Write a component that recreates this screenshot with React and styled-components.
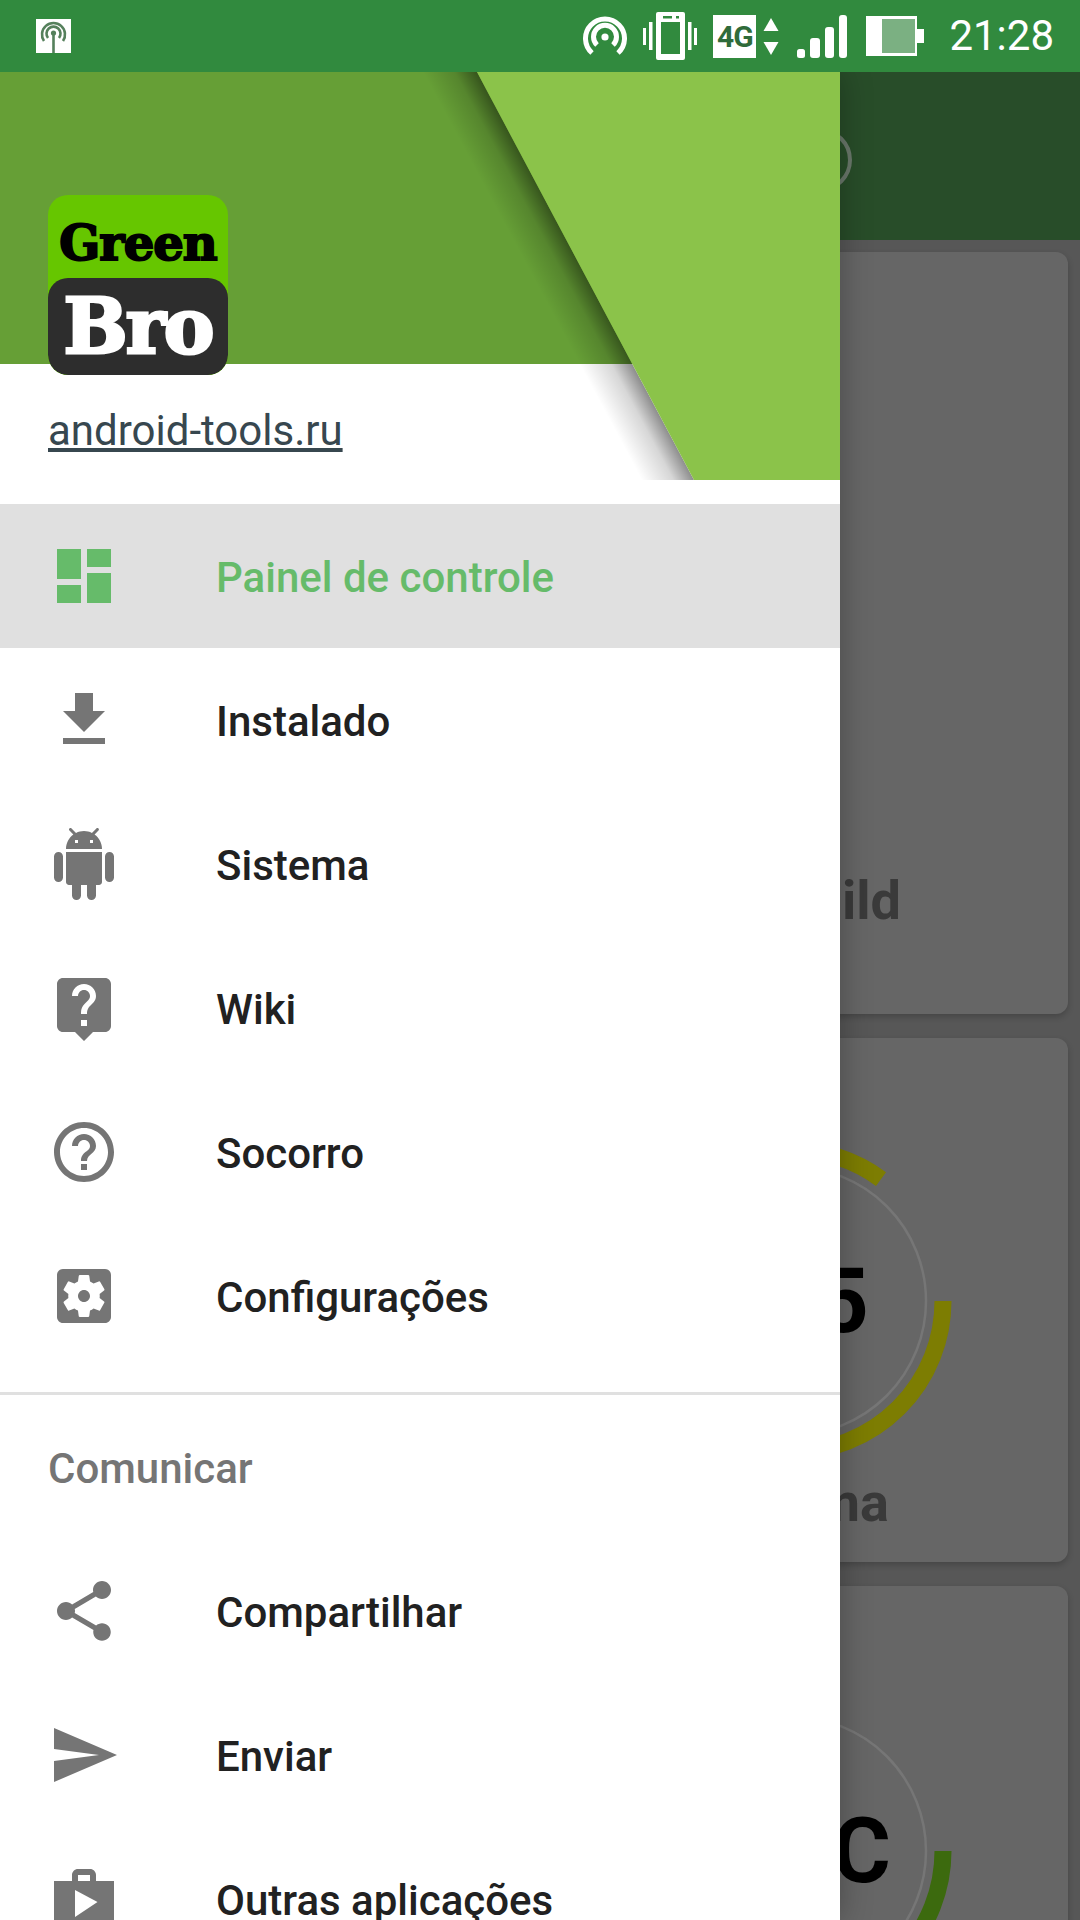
import styled, { createGlobalStyle } from "styled-components"

const GlobalStyle = createGlobalStyle`
    html, body {
        margin: 0;
        padding: 0;
        background-color: #575757;
    }

    * {
        box-sizing: border-box;
    }
`

const ICONS = {
    dashboard: "M3 13h8V3H3v10zm0 8h8v-6H3v6zm10 0h8V11h-8v10zm0-18v6h8V3h-8z",
    download: "M19 9h-4V3H9v6H5l7 7 7-7zM5 18v2h14v-2H5z",
    android: "M6 18c0 .55.45 1 1 1h1v3.5c0 .83.67 1.5 1.5 1.5s1.5-.67 1.5-1.5V19h2v3.5c0 .83.67 1.5 1.5 1.5s1.5-.67 1.5-1.5V19h1c.55 0 1-.45 1-1V8H6v10zM3.5 8C2.67 8 2 8.67 2 9.5v7c0 .83.67 1.5 1.5 1.5S5 17.33 5 16.5v-7C5 8.67 4.33 8 3.5 8zm17 0c-.83 0-1.5.67-1.5 1.5v7c0 .83.67 1.5 1.5 1.5s1.5-.67 1.5-1.5v-7c0-.83-.67-1.5-1.5-1.5zm-4.97-5.84l1.3-1.3c.2-.2.2-.51 0-.71-.2-.2-.51-.2-.71 0l-1.48 1.48C13.85 1.23 12.95 1 12 1c-.96 0-1.86.23-2.66.63L7.85.15c-.2-.2-.51-.2-.71 0-.2.2-.2.51 0 .71l1.31 1.31C6.97 3.26 6 5.01 6 7h12c0-1.99-.97-3.75-2.47-4.84zM10 5H9V4h1v1zm5 0h-1V4h1v1z",
    liveHelp: "M19 2H5c-1.11 0-2 .9-2 2v14c0 1.1.89 2 2 2h4l3 3 3-3h4c1.1 0 2-.9 2-2V4c0-1.1-.9-2-2-2zm-6 16h-2v-2h2v2zm2.07-7.75l-.9.92C13.45 11.9 13 12.5 13 14h-2v-.5c0-1.1.45-2.1 1.17-2.83l1.24-1.26c.37-.36.59-.86.59-1.41 0-1.1-.9-2-2-2s-2 .9-2 2H8c0-2.21 1.79-4 4-4s4 1.79 4 4c0 .88-.36 1.68-.93 2.25z",
    help: "M11 18h2v-2h-2v2zm1-16C6.48 2 2 6.48 2 12s4.48 10 10 10 10-4.48 10-10S17.52 2 12 2zm0 18c-4.41 0-8-3.59-8-8s3.59-8 8-8 8 3.59 8 8-3.59 8-8 8zm0-14c-2.21 0-4 1.79-4 4h2c0-1.1.9-2 2-2s2 .9 2 2c0 2-3 1.75-3 5h2c0-2.25 3-2.5 3-5 0-2.21-1.79-4-4-4z",
    settings: "M12 10c-1.1 0-2 .9-2 2s.9 2 2 2 2-.9 2-2-.9-2-2-2zm7-7H5c-1.11 0-2 .9-2 2v14c0 1.1.89 2 2 2h14c1.11 0 2-.9 2-2V5c0-1.1-.89-2-2-2zm-1.75 9c0 .23-.02.46-.05.68l1.48 1.16c.13.11.17.3.08.45l-1.4 2.42c-.09.15-.27.21-.43.15l-1.74-.7c-.36.28-.76.51-1.18.69l-.26 1.85c-.03.17-.18.3-.35.3h-2.8c-.17 0-.32-.13-.35-.29l-.26-1.85c-.43-.18-.82-.41-1.18-.69l-1.74.7c-.16.06-.34 0-.43-.15l-1.4-2.42c-.09-.15-.05-.34.08-.45l1.48-1.16c-.03-.23-.05-.46-.05-.69 0-.23.02-.46.05-.68l-1.48-1.16c-.13-.11-.17-.3-.08-.45l1.4-2.42c.09-.15.27-.21.43-.15l1.74.7c.36-.28.76-.51 1.18-.69l.26-1.85c.03-.17.18-.3.35-.3h2.8c.17 0 .32.13.35.29l.26 1.85c.43.18.82.41 1.18.69l1.74-.7c.16-.06.34 0 .43.15l1.4 2.42c.09.15.05.34-.08.45l-1.48 1.16c.03.23.05.46.05.69z",
    share: "M18 16.08c-.76 0-1.44.3-1.96.77L8.91 12.7c.05-.23.09-.46.09-.7s-.04-.47-.09-.7l7.05-4.11c.54.5 1.25.81 2.04.81 1.66 0 3-1.34 3-3s-1.34-3-3-3-3 1.34-3 3c0 .24.04.47.09.7L8.04 9.81C7.5 9.31 6.79 9 6 9c-1.66 0-3 1.34-3 3s1.34 3 3 3c.79 0 1.5-.31 2.04-.81l7.12 4.16c-.05.21-.08.43-.08.65 0 1.61 1.31 2.92 2.92 2.92 1.61 0 2.92-1.31 2.92-2.92s-1.31-2.92-2.92-2.92z",
    send: "M2.01 21L23 12 2.01 3 2 10l15 2-15 2z",
    shop: "M16 6V4c0-1.11-.89-2-2-2h-4c-1.11 0-2 .89-2 2v2H2v13c0 1.11.89 2 2 2h16c1.11 0 2-.89 2-2V6h-6zm-6-2h4v2h-4V4zM9 18V9l7.5 4-7.5 5z",
}

const mainItems = [
    { icon: "dashboard", label: "Painel de controle", active: true },
    { icon: "download", label: "Instalado" },
    { icon: "android", label: "Sistema" },
    { icon: "liveHelp", label: "Wiki" },
    { icon: "help", label: "Socorro" },
    { icon: "settings", label: "Configurações" },
]

const communicateItems = [
    { icon: "share", label: "Compartilhar" },
    { icon: "send", label: "Enviar" },
    { icon: "shop", label: "Outras aplicações" },
]

function MenuList({ items }) {
    return items.map(item => (
        <MenuRow key={item.label} $active={item.active}>
            <svg width="72" height="72" viewBox="0 0 24 24" fill="currentColor">
                <path d={ICONS[item.icon]} />
            </svg>
            <MenuLabel $active={item.active}>{item.label}</MenuLabel>
        </MenuRow>
    ))
}

function Gauge({ color, percent, value, inset }) {
    const radius = 151
    const length = 2 * Math.PI * radius
    return (
        <GaugeBox>
            <svg width="340" height="340" viewBox="0 0 340 340" fill="none">
                <circle cx="170" cy="170" r="134" stroke="#767676" strokeWidth="2.5" />
                <circle
                    cx="170"
                    cy="170"
                    r={radius}
                    stroke={color}
                    strokeWidth="17"
                    strokeDasharray={`${length * percent} ${length}`}
                />
            </svg>
            <GaugeValue $inset={inset}>{value}</GaugeValue>
        </GaugeBox>
    )
}

export default function App() {
    return (
        <Screen>
            <GlobalStyle />

            <StatusBar>
                <svg width="35" height="34" viewBox="0 0 35 34">
                    <rect width="35" height="34" fill="#fff" />
                    <g fill="none" stroke="#55805c" strokeWidth="2.6">
                        <path d="M8 22a11.5 11.5 0 1 1 19 0" />
                        <path d="M12 19a7 7 0 1 1 11 0" />
                    </g>
                    <circle cx="17.5" cy="14" r="2.6" fill="#55805c" />
                    <rect x="16.2" y="14" width="2.6" height="20" fill="#55805c" />
                </svg>

                <StatusIcons>
                    <svg width="44" height="40" viewBox="0 0 44 40" fill="none" stroke="#fff" strokeWidth="5">
                        <path d="M9 37a19.5 19.5 0 1 1 26 0" />
                        <path d="M14 29a11.5 11.5 0 1 1 16 0" />
                        <circle cx="22" cy="21" r="3.6" fill="#fff" stroke="none" />
                    </svg>

                    <svg width="54" height="48" viewBox="0 0 54 48" fill="#fff">
                        <path fillRule="evenodd" d="M15 0h25a2 2 0 0 1 2 2v44a2 2 0 0 1-2 2H15a2 2 0 0 1-2-2V2a2 2 0 0 1 2-2zM18 10v32h19V10zM20 4v2.5h9V4zM33 4v2.5h3V4z" />
                        <rect x="0" y="16" width="3" height="17" />
                        <rect x="6" y="10" width="3.5" height="28" />
                        <rect x="45" y="10" width="3.5" height="28" />
                        <rect x="51" y="16" width="3" height="17" />
                    </svg>

                    <NetworkGroup>
                        <NetworkBadge>4G</NetworkBadge>
                        <svg width="16" height="37" viewBox="0 0 16 37" fill="#fff">
                            <path d="M8 0l7.5 13H.5z" />
                            <path d="M.5 24h15L8 37z" />
                        </svg>
                    </NetworkGroup>

                    <svg width="53" height="43" viewBox="0 0 53 43" fill="#fff">
                        <rect x="2" y="34" width="8" height="9" rx="2.5" />
                        <rect x="15" y="23" width="10" height="20" rx="3" />
                        <rect x="30" y="12" width="9" height="31" rx="3" />
                        <rect x="44" y="0" width="8" height="43" rx="3" />
                    </svg>

                    <svg width="62" height="40" viewBox="0 0 62 40">
                        <path fill="#fff" d="M2 0h51v13h7v14h-7v13H2z" />
                        <rect x="18" y="3" width="33" height="34" fill="#7bb082" />
                    </svg>

                    <Clock>21:28</Clock>
                </StatusIcons>
            </StatusBar>

            <AppBar>
                <AppBarMark />
            </AppBar>

            <CardList>
                <Card $height={762} $justify="flex-end" $bottom={81}>
                    <CardTitle $inset={167}>Build</CardTitle>
                </Card>
                <Card $height={524} $justify="space-between" $top={93} $bottom={28}>
                    <Gauge color="#7d7d02" percent={0.85} value="85" inset={93} />
                    <CardTitle $inset={179}>Sistema</CardTitle>
                </Card>
                <Card $height={524} $justify="flex-start" $top={95}>
                    <Gauge color="#3c6a0e" percent={0.4} value="30°C" inset={71} />
                </Card>
            </CardList>

            <Drawer>
                <DrawerHeader>
                    <HeaderArt viewBox="0 0 840 408" width="840" height="408">
                        <defs>
                            <linearGradient id="foldShadow" gradientUnits="userSpaceOnUse" x1="585" y1="204" x2="544" y2="226">
                                <stop offset="0" stopColor="#000" stopOpacity="0.45" />
                                <stop offset="0.4" stopColor="#000" stopOpacity="0.16" />
                                <stop offset="1" stopColor="#000" stopOpacity="0" />
                            </linearGradient>
                        </defs>
                        <rect width="840" height="292" fill="#669f36" />
                        <polygon points="477,0 694,408 640,408 423,0" fill="url(#foldShadow)" />
                        <polygon points="477,0 840,0 840,408 694,408" fill="#8bc34a" />
                    </HeaderArt>

                    <Logo>
                        <LogoTop>Green</LogoTop>
                        <LogoBottom>Bro</LogoBottom>
                    </Logo>
                    <SiteLink>android-tools.ru</SiteLink>
                </DrawerHeader>

                <Menu>
                    <MenuList items={mainItems} />
                </Menu>

                <Divider />
                <Subheader>Comunicar</Subheader>

                <MenuList items={communicateItems} />
            </Drawer>
        </Screen>
    )
}

const Screen = styled.div`
    position: relative;
    width: 1080px;
    height: 1920px;
    overflow: hidden;
    background-color: #575757;
    font-family: Roboto, "Liberation Sans", sans-serif;
`

const StatusBar = styled.div`
    position: relative;
    z-index: 2;
    display: flex;
    align-items: center;
    justify-content: space-between;
    height: 72px;
    padding: 0 26px 0 36px;
    background-color: #318a3e;
`

const StatusIcons = styled.div`
    display: flex;
    align-items: center;
    gap: 16px;
`

const NetworkGroup = styled.div`
    display: flex;
    align-items: center;
    gap: 7px;
`

const NetworkBadge = styled.span`
    display: flex;
    align-items: center;
    justify-content: center;
    width: 43px;
    height: 43px;
    background-color: white;
    color: #2f6b3a;
    font-size: 30px;
    font-weight: 700;
    letter-spacing: -1px;
`

const Clock = styled.span`
    margin-left: 7px;
    color: white;
    font-size: 42px;
    line-height: 48px;
`

const AppBar = styled.div`
    display: flex;
    align-items: center;
    height: 168px;
    padding: 8px 0 0 788px;
    background-color: #284d29;
`

const AppBarMark = styled.div`
    width: 64px;
    height: 64px;
    border: 4px solid #6a786b;
    border-radius: 50%;
`

const CardList = styled.div`
    display: flex;
    flex-direction: column;
    gap: 24px;
    padding: 12px;
`

const Card = styled.div`
    display: flex;
    flex-direction: column;
    flex-shrink: 0;
    justify-content: ${props => props.$justify};
    height: ${props => props.$height}px;
    padding-top: ${props => props.$top || 0}px;
    padding-bottom: ${props => props.$bottom || 0}px;
    background-color: #666666;
    border-radius: 12px;
    box-shadow: 0 3px 6px rgba(0, 0, 0, 0.2);
`

const CardTitle = styled.div`
    padding-right: ${props => props.$inset}px;
    color: #3a3a3a;
    font-size: 54px;
    font-weight: 700;
    line-height: 64px;
    text-align: right;
`

const GaugeBox = styled.div`
    position: relative;
    width: 340px;
    height: 340px;
    margin-left: 610px;

    svg {
        display: block;
    }
`

const GaugeValue = styled.div`
    position: absolute;
    inset: 0;
    display: flex;
    align-items: center;
    justify-content: flex-end;
    padding-right: ${props => props.$inset}px;
    color: #000;
    font-size: 90px;
    font-weight: 700;
`

const Drawer = styled.div`
    position: absolute;
    top: 72px;
    left: 0;
    width: 840px;
    height: 1848px;
    overflow: hidden;
    background-color: white;
    box-shadow: 0 0 30px rgba(0, 0, 0, 0.3);
`

const DrawerHeader = styled.div`
    position: relative;
    height: 408px;
    padding: 123px 0 0 48px;
`

const HeaderArt = styled.svg`
    position: absolute;
    top: 0;
    left: 0;
`

const Logo = styled.div`
    position: relative;
    display: flex;
    flex-direction: column;
    justify-content: flex-end;
    width: 180px;
    height: 180px;
    overflow: hidden;
    background-color: #66c600;
    border-radius: 20px;
`

const LogoTop = styled.div`
    height: 83px;
    padding-top: 18px;
    color: #000;
    font-family: "DejaVu Serif", "Liberation Serif", serif;
    font-size: 48px;
    font-weight: 700;
    letter-spacing: -1px;
    line-height: 60px;
    text-align: center;
    white-space: nowrap;
    -webkit-text-stroke: 2px #000;
`

const LogoBottom = styled.div`
    height: 97px;
    background-color: #2d2d2d;
    border-radius: 20px;
    color: white;
    font-family: "DejaVu Serif", "Liberation Serif", serif;
    font-size: 76px;
    font-weight: 700;
    letter-spacing: -2px;
    line-height: 97px;
    text-align: center;
    -webkit-text-stroke: 3px white;
`

const SiteLink = styled.a`
    position: relative;
    display: inline-block;
    margin-top: 32px;
    color: #37474f;
    font-size: 42px;
    font-weight: 400;
    line-height: 47px;
    text-decoration: underline;
`

const Menu = styled.div`
    margin-top: 24px;
`

const MenuRow = styled.div`
    display: flex;
    align-items: center;
    flex-shrink: 0;
    gap: 96px;
    height: 144px;
    padding-left: 48px;
    background-color: ${props => props.$active ? "#e0e0e0" : "transparent"};
    color: ${props => props.$active ? "#66bb6a" : "#757575"};
`

const MenuLabel = styled.span`
    padding-top: 2px;
    color: ${props => props.$active ? "#66bb6a" : "#212121"};
    font-size: 42px;
    font-weight: 500;
`

const Divider = styled.div`
    height: 3px;
    margin-top: 24px;
    background-color: #e0e0e0;
`

const Subheader = styled.div`
    display: flex;
    align-items: center;
    height: 144px;
    padding: 2px 0 0 48px;
    color: #757575;
    font-size: 42px;
    font-weight: 500;
`
